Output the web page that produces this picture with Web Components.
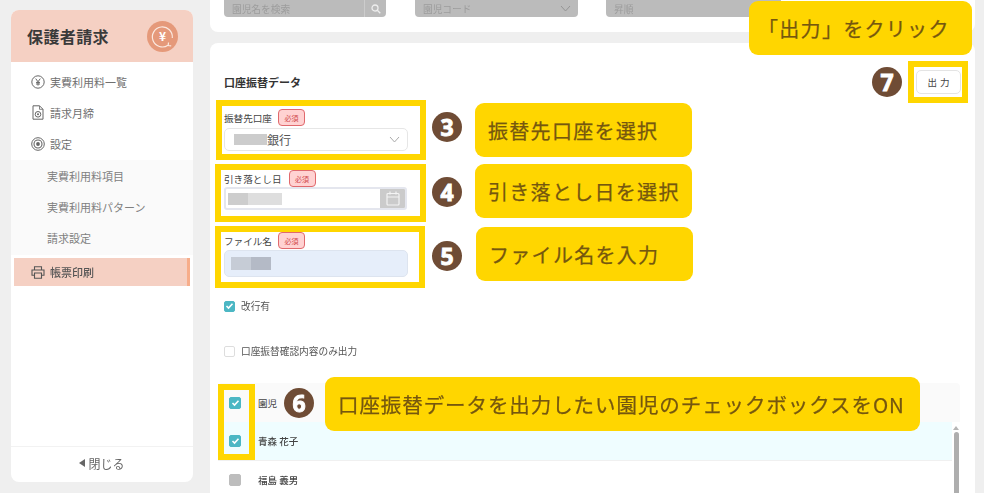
<!DOCTYPE html>
<html lang="ja">
<head>
<meta charset="utf-8">
<title>保護者請求</title>
<style>
html, body { margin: 0; height: 100%; overflow: hidden; background: #efefef; }
body { font-family: "Noto Sans CJK JP", "Noto Sans", sans-serif; color: #444; }
</style>
</head>
<body>
<app-shell>
  <app-sidebar slot="side"></app-sidebar>
  <main-panel slot="main"></main-panel>
</app-shell>

<script>
const BASE = `*{box-sizing:border-box}`;

function mount(el, html) {
    el.attachShadow({ mode: 'open' }).innerHTML = html;
}

const chevron = `<svg width="11" height="7" viewBox="0 0 11 7" fill="none" stroke="currentColor" stroke-width="1"><path d="M1 1l4.5 5L10 1"/></svg>`;

// Page frame
class AppShell extends HTMLElement {
    constructor() {
        super();
        mount(this, `<style>${BASE}
            :host { display: flex; gap: 17px; height: 493px; padding-left: 11px; padding-right: 9px; overflow: hidden; filter: blur(.3px); }
            ::slotted([slot=side]) { flex: none; }
            ::slotted([slot=main]) { flex: 1; min-width: 0; }
        </style><slot name="side"></slot><slot name="main"></slot>`);
    }
}
customElements.define('app-shell', AppShell);

// One sidebar link, icon goes in the slot
class NavItem extends HTMLElement {
    constructor() {
        super();
        mount(this, `<style>${BASE}
            :host { display: flex; align-items: center; height: 31px; padding-left: 20px; gap: 5px; font-size: 11px; color: #707070; }
            :host([sub]) { padding-left: 36px; color: #808080; }
            :host([active]) { height: 28px; margin: 0 3px; padding-left: 17px; background: #f5d0c3; border-right: 3px solid #f7ad8a; color: #555; font-weight: 500; }
            svg, ::slotted(svg) { flex: none; }
        </style><slot name="icon"></slot><span><slot></slot></span>`);
    }
}
customElements.define('nav-item', NavItem);

class AppSidebar extends HTMLElement {
    constructor() {
        super();
        mount(this, `<style>${BASE}
            :host { display: flex; flex-direction: column; width: 182px; height: 472px; margin-top: 10px; background: #fff; border-radius: 8px; overflow: hidden; }
            .head { flex: none; height: 52px; background: #f5d0c3; display: flex; align-items: center; justify-content: space-between; padding: 0 15px 0 16px; }
            h1 { margin: 0; font-size: 16px; font-weight: 700; color: #3a3a3a; letter-spacing: .4px; }
            nav { padding-top: 4px; }
            .sub { background: #fafafa; margin-top: 1px; padding: 0 0 1px; height: 95px; }
            nav-item[active] { margin-top: 3px; }
            .foot { margin-top: auto; height: 36px; padding-bottom: 3px; border-top: 1px solid #f2f2f2; display: flex; align-items: center; justify-content: center; font-size: 12px; color: #666; gap: 3px; }
            .arrow { width: 0; height: 0; border: 4px solid transparent; border-right: 6px solid #666; border-left: 0; }
        </style>
        <div class="head">
            <h1>保護者請求</h1>
            <svg width="31" height="31" viewBox="0 0 31 31">
                <circle cx="15.5" cy="15.5" r="15.5" fill="#e5997a"/>
                <path d="M21 24.2A10 10 0 1 1 25.3 17" fill="none" stroke="#fbe9e0" stroke-width="1.2"/>
                <path d="M21.5 21.5l-.3 3 3 .4" fill="none" stroke="#fbe9e0" stroke-width="1.2"/>
                <text x="15.5" y="20" font-size="12" font-weight="700" text-anchor="middle" fill="#fff" font-family="Noto Sans CJK JP">¥</text>
            </svg>
        </div>
        <nav>
            <nav-item>
                <svg slot="icon" width="14" height="14" viewBox="0 0 14 14"><circle cx="7" cy="7" r="6.2" fill="none" stroke="#666" stroke-width="1"/><path d="M4.7 3.6L7 6.8l2.3-3.2M7 6.8v3.8M5 7.4h4M5 9h4" fill="none" stroke="#666" stroke-width="1"/></svg>
                実費利用料一覧
            </nav-item>
            <nav-item>
                <svg slot="icon" width="14" height="15" viewBox="0 0 14 15"><path d="M2 .8h6.5L12 4.3v9.9H2z" fill="none" stroke="#666" stroke-width="1"/><path d="M8.5.8v3.5H12" fill="none" stroke="#666" stroke-width=".8"/><circle cx="7" cy="9.3" r="2.8" fill="none" stroke="#666" stroke-width="1"/><circle cx="7" cy="9.3" r="1" fill="#666"/></svg>
                請求月締
            </nav-item>
            <nav-item>
                <svg slot="icon" width="14" height="14" viewBox="0 0 14 14"><circle cx="7" cy="7" r="6.3" fill="none" stroke="#666" stroke-width="1"/><circle cx="7" cy="7" r="4" fill="none" stroke="#666" stroke-width="1.1"/><circle cx="7" cy="7" r="1.9" fill="#666"/></svg>
                設定
            </nav-item>
            <div class="sub">
                <nav-item sub>実費利用料項目</nav-item>
                <nav-item sub>実費利用料パターン</nav-item>
                <nav-item sub>請求設定</nav-item>
            </div>
            <nav-item active>
                <svg slot="icon" width="14" height="13" viewBox="0 0 14 13"><path d="M3.5 4V.7h7V4M3.5 9.3H1V4h12v5.3h-2.5" fill="none" stroke="#555" stroke-width="1.1"/><path d="M3.5 7h7v5.3h-7z" fill="none" stroke="#555" stroke-width="1.1"/></svg>
                帳票印刷
            </nav-item>
        </nav>
        <div class="foot"><span class="arrow"></span><span>閉じる</span></div>`);
    }
}
customElements.define('app-sidebar', AppSidebar);

// Brown numbered dot
class StepMark extends HTMLElement {
    constructor() {
        super();
        mount(this, `<style>${BASE}
            :host { display: flex; flex: none; align-items: center; justify-content: center; width: 30px; height: 30px; border-radius: 50%; background: #6f4c35; color: #fff; font: 700 23px/1 "Noto Sans", sans-serif; -webkit-text-stroke: .9px #fff; }
        </style><slot></slot>`);
    }
}
customElements.define('step-mark', StepMark);

// Yellow balloon
class NoteCallout extends HTMLElement {
    constructor() {
        super();
        mount(this, `<style>${BASE}
            :host { display: flex; flex: none; align-items: center; height: 54px; border-radius: 9px; background: #ffd600; color: #75570f; font-size: 20px; font-weight: 400; -webkit-text-stroke: .25px #75570f; letter-spacing: 1.3px; white-space: nowrap; }
        </style><slot></slot>`);
    }
}
customElements.define('note-callout', NoteCallout);

class ReqBadge extends HTMLElement {
    constructor() {
        super();
        mount(this, `<style>${BASE}
            :host { display: inline-flex; align-items: center; justify-content: center; width: 27px; height: 17px; border: 1px solid #e0696d; border-radius: 4px; background: #ffd2d2; color: #d0484c; font-size: 7px; }
        </style>必須`);
    }
}
customElements.define('req-badge', ReqBadge);

// Yellow frame around a field, the step dot and its balloon
class AnnotatedField extends HTMLElement {
    constructor() {
        super();
        const step = this.getAttribute('step');
        const note = this.getAttribute('note');
        const label = this.getAttribute('label');
        mount(this, `<style>${BASE}
            :host { display: flex; align-items: flex-start; margin-top: 4px; }
            .frame { flex: none; width: var(--frame-w, 210px); height: var(--frame-h, 60px); margin-left: var(--frame-x, 0); border: 6px solid #ffd600; padding: var(--pad-top, 3px) 0 0 var(--pad-x, 2px); }
            .label { display: flex; align-items: center; gap: var(--label-gap, 6px); height: 17px; font-size: 9.6px; color: #444; }
            .input { margin-top: var(--input-gap, 2px); }
            step-mark { margin: var(--mark-top, 12px) 0 0 var(--mark-x, 6px); }
            note-callout { margin: var(--note-top, 3px) 0 0 var(--note-x, 13px); width: 217px; padding-left: var(--note-pad, 13px); }
        </style>
        <div class="frame">
            <div class="label"><span>${label}</span><req-badge></req-badge></div>
            <div class="input"><slot></slot></div>
        </div>
        <step-mark>${step}</step-mark>
        <note-callout>${note}</note-callout>`);
    }
}
customElements.define('annotated-field', AnnotatedField);

// Form box: mode picks select, date or filled text look
class FieldBox extends HTMLElement {
    constructor() {
        super();
        mount(this, `<style>${BASE}
            :host { display: flex; align-items: center; position: relative; height: var(--h, 23px); width: 184px; border: 1px solid #e6e6e6; border-radius: 5px; background: #fff; padding-left: var(--x, 9px); font-size: 12px; color: #555; overflow: hidden; }
            :host([mode=date]) { border: 2px solid #e4e6ee; border-radius: 3px; padding-left: 2px; width: 183px; }
            :host([mode=file]) { background: #e6eefa; border-color: #dde4ef; padding-left: 6px; }
            .end { margin-left: auto; margin-right: 7px; color: #aaa; display: flex; }
            .cal { margin-left: auto; align-self: stretch; width: 25px; background: #cbcbcb; display: flex; align-items: center; justify-content: center; }
        </style><slot></slot>${this.getAttribute('mode') === 'date'
            ? `<span class="cal"><svg width="14" height="15" viewBox="0 0 14 15" fill="none" stroke="#f4f4f4" stroke-width="1.2"><rect x="1" y="2.5" width="12" height="11.5" rx="1"/><path d="M1 6h12M4 .5v3M10 .5v3"/></svg></span>`
            : this.getAttribute('mode') === 'select' ? `<span class="end">${chevron}</span>` : ''}`);
    }
}
customElements.define('field-box', FieldBox);

// Redacted grey patch
class MaskBlock extends HTMLElement {
    constructor() {
        super();
        mount(this, `<style>
            :host { display: block; flex: none; width: var(--w); height: var(--h); background: var(--c); }
        </style>`);
    }
}
customElements.define('mask-block', MaskBlock);

class CheckMark extends HTMLElement {
    constructor() {
        super();
        const on = this.hasAttribute('on');
        mount(this, `<style>${BASE}
            :host { display: flex; flex: none; align-items: center; justify-content: center; width: 11px; height: 11px; border-radius: 2px; border: 1px solid #ddd; background: #fff; }
            :host([on]) { background: #4cb7c4; border-color: #4cb7c4; }
            :host([off]) { width: 12px; height: 12px; background: #bdbdbd; border-color: #bdbdbd; }
            :host([big]) { width: 12px; height: 12px; }
        </style>${on ? `<svg width="9" height="8" viewBox="0 0 9 8" fill="none" stroke="#fff" stroke-width="1.6"><path d="M1.5 4l2 2 4-4.3"/></svg>` : ''}`);
    }
}
customElements.define('check-mark', CheckMark);

class CheckOption extends HTMLElement {
    constructor() {
        super();
        mount(this, `<style>${BASE}
            :host { display: flex; align-items: center; gap: 6px; height: 16px; font-size: 9.7px; color: #555; }
        </style><slot name="box"></slot><span><slot></slot></span>`);
    }
}
customElements.define('check-option', CheckOption);

// Children list with scrollbar
class ChildTable extends HTMLElement {
    constructor() {
        super();
        mount(this, `<style>${BASE}
            :host { display: block; position: relative; width: 742px; font-size: 9.5px; color: #444; }
            .row { display: flex; align-items: center; gap: 17px; height: 39px; padding-left: 11px; border-bottom: 1px solid #f0f0f0; }
            .row.head { background: #fafafa; border-radius: 4px 4px 0 0; border-bottom: 0; }
            .row.hit { background: #effdff; }
            .name { font-weight: 500; }
            .body { position: relative; }
            .scroll { position: absolute; right: 0; top: 0; width: 8px; height: 80px; background: #fff; }
            .up { width: 0; height: 0; margin: 4px auto 0; border: 3px solid transparent; border-bottom: 4px solid #b5b5b5; border-top: 0; }
            .thumb { width: 5px; height: 70px; margin: 2px auto 0; background: #aeaeae; border-radius: 3px; }
            .frame6 { position: absolute; left: 0; top: 1px; width: 37px; height: 76px; border: 6px solid #ffd600; }
            step-mark { position: absolute; left: 66px; top: 5px; }
            note-callout { position: absolute; left: 107px; top: -6px; width: 595px; padding-left: 13px; font-size: 20.5px; letter-spacing: .92px; }
        </style>
        <div class="row head"><check-mark on big></check-mark><span>園児</span></div>
        <div class="body">
            <div class="row hit"><check-mark on big></check-mark><span class="name">青森 花子</span></div>
            <div class="row"><check-mark off></check-mark><span class="name">福島 義男</span></div>
            <div class="scroll"><div class="up"></div><div class="thumb"></div></div>
        </div>
        <div class="frame6"></div>
        <step-mark>6</step-mark>
        <note-callout>口座振替データを出力したい園児のチェックボックスをON</note-callout>`);
    }
}
customElements.define('child-table', ChildTable);

// Dimmed search filters cut off by the top of the page
class FilterBar extends HTMLElement {
    constructor() {
        super();
        mount(this, `<style>${BASE}
            :host { display: flex; gap: 29px; height: 32px; padding-left: 14px; background: #fff; border-radius: 0 0 8px 8px; font-size: 9.7px; color: #9c9c9c; }
            .f { display: flex; align-items: center; width: 163px; height: 17px; background: #bbb; border-radius: 0 0 4px 4px; padding-left: 8px; overflow: hidden; }
            .f.first { width: 162px; }
            .f.wide { width: 175px; margin-left: -1px; }
            .btn { margin-left: auto; align-self: stretch; width: 22px; border-left: 1px solid #ccc; display: flex; align-items: center; justify-content: center; }
            .chev { margin-left: auto; margin-right: 7px; display: flex; color: #949494; }
        </style>
        <div class="f first">園児名を検索<span class="btn"><svg width="10" height="10" viewBox="0 0 10 10" fill="none" stroke="#eee" stroke-width="1.3"><circle cx="4" cy="4" r="3"/><path d="M6.3 6.3L9.3 9.3"/></svg></span></div>
        <div class="f">園児コード<span class="chev">${chevron}</span></div>
        <div class="f wide">昇順</div>`);
    }
}
customElements.define('filter-bar', FilterBar);

class MainPanel extends HTMLElement {
    constructor() {
        super();
        mount(this, `<style>${BASE}
            :host { display: block; position: relative; width: 765px; }
            .card { height: 500px; margin-top: 11px; padding: 18px 7px 0 6px; background: #fff; border-radius: 8px 8px 0 0; }
            .top { display: flex; align-items: center; gap: 6px; height: 42px; margin-bottom: -3px; }
            h2 { margin: 0 auto 0 8px; font-size: 11px; font-weight: 700; color: #333; }
            .frame7 { width: 60px; height: 42px; border: 6px solid #ffd600; display: flex; align-items: center; justify-content: center; }
            .out { width: 45px; height: 24px; margin-left: 1px; border: 1px solid #e4e4e4; border-radius: 5px; background: #fff; color: #444; font: 9.5px "Noto Sans CJK JP", sans-serif; letter-spacing: 3px; padding: 0 0 0 3px; }
            annotated-field:first-of-type { margin-top: 0; }
            .f4 { --frame-x: -1px; --frame-w: 211px; --frame-h: 58px; --note-top: 0; --mark-top: 13px; --pad-top: 0; --pad-x: 3px; --label-gap: 7px; --input-gap: 0px; }
            .f5 { --frame-x: -1px; --frame-w: 210px; --frame-h: 62px; --note-top: 1px; --mark-top: 15px; --pad-top: 0; --pad-x: 3px; --input-gap: 1px; --mark-x: 7px; --note-x: 14px; }
            .opt1 { margin: 10px 0 0 8px; }
            .opt2 { margin: 29px 0 0 8px; }
            child-table { margin: 24px 0 0 2px; }
            .note7 { position: absolute; left: 539px; top: 1px; width: 223px; padding-left: 9px; }
        </style>
        <filter-bar></filter-bar>
        <div class="card">
            <div class="top">
                <h2>口座振替データ</h2>
                <step-mark>7</step-mark>
                <div class="frame7"><button class="out">出力</button></div>
            </div>
            <annotated-field step="3" label="振替先口座" note="振替先口座を選択">
                <field-box mode="select"><mask-block style="--w:33px;--h:11px;--c:#ccc"></mask-block><span>銀行</span></field-box>
            </annotated-field>
            <annotated-field class="f4" step="4" label="引き落とし日" note="引き落とし日を選択">
                <field-box mode="date"><mask-block style="--w:20px;--h:12px;--c:#cdcdcd"></mask-block><mask-block style="--w:34px;--h:12px;--c:#dedede"></mask-block></field-box>
            </annotated-field>
            <annotated-field class="f5" step="5" label="ファイル名" note="ファイル名を入力" style="--h:27px">
                <field-box mode="file"><mask-block style="--w:20px;--h:13px;--c:#c6ccd6"></mask-block><mask-block style="--w:20px;--h:13px;--c:#b4bac6"></mask-block></field-box>
            </annotated-field>
            <check-option class="opt1"><check-mark slot="box" on></check-mark>改行有</check-option>
            <check-option class="opt2"><check-mark slot="box"></check-mark>口座振替確認内容のみ出力</check-option>
            <child-table></child-table>
        </div>
        <note-callout class="note7">「出力」をクリック</note-callout>`);
    }
}
customElements.define('main-panel', MainPanel);
</script>
</body>
</html>
